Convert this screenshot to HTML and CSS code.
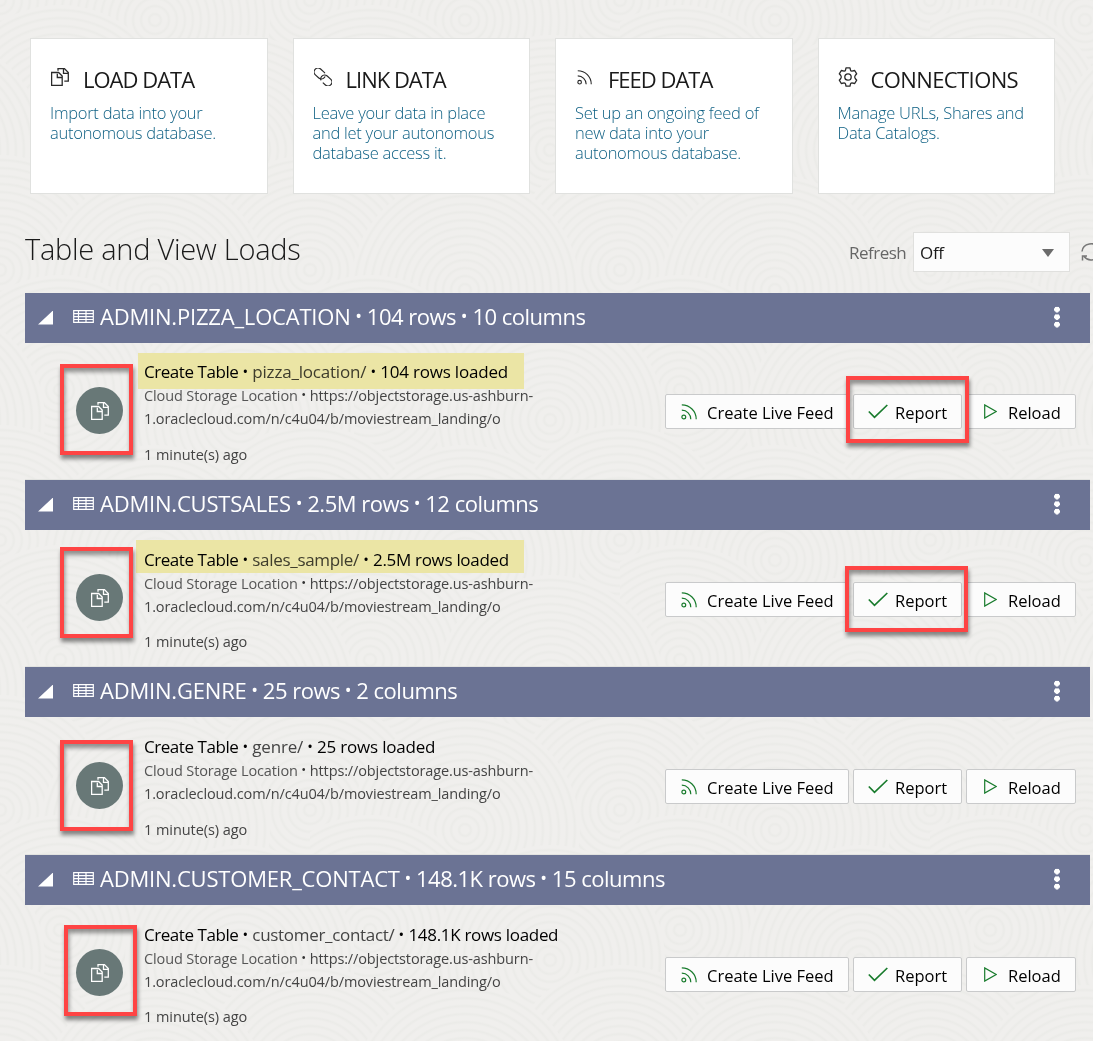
FILE: index.html
```html
<!DOCTYPE html>
<html lang="en">
<head>
<meta charset="utf-8">
<title>Data Load</title>
<link rel="stylesheet" href="styles.css">
</head>
<body>
<svg class="defs" width="0" height="0" aria-hidden="true">
  <symbol id="i-copy" viewBox="0 0 18 18"><path d="M.6 4.500h7l3.600 3.600v9.300H.6zM6.300 5.800v3.700h4.600M7 2.800V.6h6.400l3.900 3.900v8.700h-4M12.500 1.200v4.200h4.300" fill="none" stroke="currentColor" stroke-width="1.300"/></symbol>
  <symbol id="i-link" viewBox="0 0 18 18"><g fill="none" stroke="currentColor" stroke-width="1.200"><rect x="-6.200" y="-3.900" width="12.400" height="7.800" rx="3.900" transform="translate(5.700 5.500) rotate(42)" stroke-dasharray="29 3" stroke-dashoffset="-9"/><rect x="-6.200" y="-3.900" width="12.400" height="7.800" rx="3.900" transform="translate(12.300 12.500) rotate(42)" stroke-dasharray="29 3" stroke-dashoffset="9"/></g></symbol>
  <symbol id="i-feed" viewBox="0 0 16 16"><g fill="none" stroke="currentColor" stroke-width="1.200"><circle cx="2.800" cy="13" r="1.900"/><path d="M.8 6.200c5 0 9 4 9 9M.8 .8c8 0 14.400 6.400 14.400 14.400"/></g></symbol>
  <symbol id="i-gear" viewBox="0 0 20 20"><g fill="none" stroke="currentColor" stroke-width="1.300" stroke-linejoin="round"><circle cx="10" cy="10" r="3.200"/><path d="M8 .8h4l.5 2.300q.2 1 1.300 1l2.900-.6 2 3.300-1.500 1.700q-1 1.500 0 3l1.500 1.700-2 3.300-2.900-.6q-1.100 0-1.300 1L12 19.200H8l-.5-2.300q-.2-1-1.300-1l-2.900.6-2-3.300 1.500-1.700q1-1.500 0-3L1.300 6.800l2-3.300 2.900.6q1.100 0 1.300-1z"/></g></symbol>
  <symbol id="i-table" viewBox="0 0 21 13"><path d="M.7.7h19.600v11.600H.7zM.7 3.700h19.600M.7 6.600h19.600M.7 9.500h19.600M5.500 .7v11.600M13 .7v11.600" fill="none" stroke="currentColor" stroke-width="1.200"/></symbol>
  <symbol id="i-check" viewBox="0 0 20 15"><path d="m.8 7.500 5.700 5.800L19.300 1" fill="none" stroke="currentColor" stroke-width="1.700"/></symbol>
  <symbol id="i-play" viewBox="0 0 13 15"><path d="M.7 .9v13.200l11.500-6.600z" fill="none" stroke="currentColor" stroke-width="1.200"/></symbol>
</svg>
<svg class="backdrop" width="1093" height="1041" aria-hidden="true">
  <defs>
    <radialGradient id="rings" gradientUnits="userSpaceOnUse" cx="0" cy="0" r="8" spreadMethod="repeat">
      <stop offset="0" stop-color="#f0efed"/><stop offset=".45" stop-color="#f0efed"/><stop offset=".75" stop-color="#ebebe8"/><stop offset="1" stop-color="#f0efed"/>
    </radialGradient>
    <circle id="knot" r="115" fill="url(#rings)"/>
    <pattern id="tile" width="310" height="270" patternUnits="userSpaceOnUse">
      <rect width="310" height="270" fill="#f0efed"/>
      <use href="#knot" x="0" y="0"/><use href="#knot" x="310" y="0"/><use href="#knot" x="155" y="20"/>
      <use href="#knot" x="60" y="120"/><use href="#knot" x="240" y="150"/><use href="#knot" x="-70" y="150"/>
      <use href="#knot" x="0" y="270"/><use href="#knot" x="310" y="270"/><use href="#knot" x="155" y="290"/>
    </pattern>
  </defs>
  <rect width="1093" height="1041" fill="url(#tile)"/>
</svg>
<main class="page">
  <nav class="cards">
    <a class="card"><h2><svg class="ic"><use href="#i-copy"/></svg><span>LOAD DATA</span></h2><p>Import data into your<br>autonomous database.</p></a>
    <a class="card"><h2><svg class="ic"><use href="#i-link"/></svg><span>LINK DATA</span></h2><p>Leave your data in place<br>and let your autonomous<br>database access it.</p></a>
    <a class="card"><h2><svg class="ic feed"><use href="#i-feed"/></svg><span>FEED DATA</span></h2><p>Set up an ongoing feed of<br>new data into your<br>autonomous database.</p></a>
    <a class="card"><h2 class="wide"><svg class="ic gear"><use href="#i-gear"/></svg><span>CONNECTIONS</span></h2><p>Manage URLs, Shares and<br>Data Catalogs.</p></a>
  </nav>
  <header class="toolbar">
    <h1>Table and View Loads</h1>
    <div class="refresh"><span class="label">Refresh</span><div class="select"><span>Off</span><i class="caret"></i></div>
      <svg class="reload" viewBox="0 0 20 20"><path d="M1 9.500a9 8.500 0 0 1 17-3M19 11A9 8.500 0 0 1 3 14.500M1.500 18.500V14h4.500" fill="none" stroke="currentColor" stroke-width="1.500"/></svg></div>
  </header>

  <section class="load">
    <div class="bar"><i class="tri"></i><svg class="tbl"><use href="#i-table"/></svg><span class="name">ADMIN.PIZZA_LOCATION</span><b>•</b><span>104 rows</span><b>•</b><span>10 columns</span><i class="dots"></i></div>
    <div class="body">
      <div class="disc"><svg><use href="#i-copy"/></svg></div>
      <div class="info">
        <div class="line1"><span class="op">Create Table</span><b>•</b><span class="soft">pizza_location/</span><b>•</b><span>104 rows loaded</span></div>
        <div class="line2"><span class="src">Cloud Storage Location</span><b>•</b><span>https://objectstorage.us-ashburn-</span></div>
        <div class="line3">1.oraclecloud.com/n/c4u04/b/moviestream_landing/o</div>
        <div class="ago">1 minute(s) ago</div>
      </div>
      <div class="actions"><button class="w1"><svg class="bf"><use href="#i-feed"/></svg>Create Live Feed</button><button class="w2"><svg class="bc"><use href="#i-check"/></svg>Report</button><button class="w3"><svg class="bp"><use href="#i-play"/></svg>Reload</button></div>
    </div>
    <div class="mark m1"></div><div class="frame f1"></div><div class="frame r1"></div>
  </section>

  <section class="load low">
    <div class="bar"><i class="tri"></i><svg class="tbl"><use href="#i-table"/></svg><span class="name">ADMIN.CUSTSALES</span><b>•</b><span>2.5M rows</span><b>•</b><span>12 columns</span><i class="dots"></i></div>
    <div class="body">
      <div class="disc"><svg><use href="#i-copy"/></svg></div>
      <div class="info">
        <div class="line1 snug"><span class="op">Create Table</span><b>•</b><span class="soft">sales_sample/</span><b>•</b><span>2.5M rows loaded</span></div>
        <div class="line2"><span class="src">Cloud Storage Location</span><b>•</b><span>https://objectstorage.us-ashburn-</span></div>
        <div class="line3">1.oraclecloud.com/n/c4u04/b/moviestream_landing/o</div>
        <div class="ago">1 minute(s) ago</div>
      </div>
      <div class="actions"><button class="w1"><svg class="bf"><use href="#i-feed"/></svg>Create Live Feed</button><button class="w2"><svg class="bc"><use href="#i-check"/></svg>Report</button><button class="w3"><svg class="bp"><use href="#i-play"/></svg>Reload</button></div>
    </div>
    <div class="mark m2"></div><div class="frame f2"></div><div class="frame r2"></div>
  </section>

  <section class="load low tall">
    <div class="bar"><i class="tri"></i><svg class="tbl"><use href="#i-table"/></svg><span class="name">ADMIN.GENRE</span><b>•</b><span>25 rows</span><b>•</b><span>2 columns</span><i class="dots"></i></div>
    <div class="body">
      <div class="disc"><svg><use href="#i-copy"/></svg></div>
      <div class="info">
        <div class="line1"><span class="op">Create Table</span><b>•</b><span class="soft">genre/</span><b>•</b><span>25 rows loaded</span></div>
        <div class="line2"><span class="src">Cloud Storage Location</span><b>•</b><span>https://objectstorage.us-ashburn-</span></div>
        <div class="line3">1.oraclecloud.com/n/c4u04/b/moviestream_landing/o</div>
        <div class="ago">1 minute(s) ago</div>
      </div>
      <div class="actions"><button class="w1"><svg class="bf"><use href="#i-feed"/></svg>Create Live Feed</button><button class="w2"><svg class="bc"><use href="#i-check"/></svg>Report</button><button class="w3"><svg class="bp"><use href="#i-play"/></svg>Reload</button></div>
    </div>
    <div class="frame f3"></div>
  </section>

  <section class="load low">
    <div class="bar"><i class="tri"></i><svg class="tbl"><use href="#i-table"/></svg><span class="name">ADMIN.CUSTOMER_CONTACT</span><b>•</b><span>148.1K rows</span><b>•</b><span>15 columns</span><i class="dots"></i></div>
    <div class="body">
      <div class="disc"><svg><use href="#i-copy"/></svg></div>
      <div class="info">
        <div class="line1 snug"><span class="op">Create Table</span><b>•</b><span class="soft">customer_contact/</span><b>•</b><span>148.1K rows loaded</span></div>
        <div class="line2"><span class="src">Cloud Storage Location</span><b>•</b><span>https://objectstorage.us-ashburn-</span></div>
        <div class="line3">1.oraclecloud.com/n/c4u04/b/moviestream_landing/o</div>
        <div class="ago">1 minute(s) ago</div>
      </div>
      <div class="actions"><button class="w1"><svg class="bf"><use href="#i-feed"/></svg>Create Live Feed</button><button class="w2"><svg class="bc"><use href="#i-check"/></svg>Report</button><button class="w3"><svg class="bp"><use href="#i-play"/></svg>Reload</button></div>
    </div>
    <div class="frame f4"></div>
  </section>
</main>
</body>
</html>
```
FILE: styles.css
```css
* { box-sizing: border-box; }
html, body { margin: 0; height: 1041px; overflow: hidden; }
body { background: #f0efed; font-family: "Open Sans", "Noto Sans", sans-serif; color: #1a1a1a; position: relative; }
.defs { position: absolute; }
.backdrop { position: absolute; left: 0; top: 0; z-index: 0; }
.page { position: relative; z-index: 1; width: 1093px; height: 1041px; overflow: hidden; padding-top: 38px; }
h1, h2, p { margin: 0; font-weight: 400; }
b { font-weight: 400; }

.cards { display: grid; grid-template-columns: repeat(4, 237.500px); gap: 25px; padding-left: 30px; }
.card { height: 156px; background: #fff; border: 1px solid #e0e1df; padding: 25px 0 0 19px; white-space: nowrap; }
.card h2 { display: flex; font-size: 22px; line-height: 30px; letter-spacing: -1px; padding-left: 1px; }
.card h2.wide { letter-spacing: -.6px; }
.card h2 span { margin-left: 14px; }
.ic { width: 18px; height: 18px; margin-top: 4px; color: #2a2a2a; flex: none; }
.ic.feed { width: 15px; height: 15px; margin: 6px 2px 0 1px; }
.ic.gear { width: 20px; height: 20px; margin: 3px -1px 0 -1px; }
.card p { font-size: 16.500px; line-height: 20px; margin-top: 9px; color: #0d5f83; font-weight: 350; letter-spacing: -.26px; }

.toolbar { display: flex; justify-content: space-between; height: 99px; padding: 38px 0 0 25px; }
h1 { font-size: 29px; line-height: 36px; margin-top: -1px; font-weight: 300; letter-spacing: -.27px; }
.refresh { display: flex; width: 244px; height: 40px; flex: none; align-items: center; font-size: 17px; white-space: nowrap; }
.refresh .label { width: 64px; flex: none; color: #666; letter-spacing: -.5px; }
.select { width: 157px; height: 40px; flex: none; background: #fcfcfc; border: 1px solid #e0e0de; display: flex; align-items: center; justify-content: space-between; padding: 1px 15px 0 6px; letter-spacing: -.3px; }
.caret { border: 6px solid transparent; border-top: 8px solid #6b6b6b; border-bottom: 0; }
.reload { width: 20px; height: 20px; margin-left: 11px; color: #777; flex: none; }

.load { position: relative; height: 187px; margin-left: 25px; width: 1065px; border-bottom: 1px solid #e2e3e0; }
.load.tall { height: 188px; }
.bar { height: 50px; background: #6b7394; color: #fff; display: flex; align-items: center; font-size: 22px; letter-spacing: -.5px; padding: 0 30px 4px 14px; white-space: nowrap; }
.bar .name { letter-spacing: -.2px; }
.bar b { width: 16.300px; text-align: center; font-size: 18px; letter-spacing: 0; }
.tri { width: 15px; height: 14px; margin: 3px 0 0 -1px; background: #fff; clip-path: polygon(100% 0, 100% 100%, 0 100%); }
.tbl { width: 21px; height: 13px; margin: 1px 6px 0 20px; }
.dots { width: 6px; height: 22px; margin-left: auto; background: radial-gradient(circle at 3px 3.500px, #fff 2.600px, transparent 3.100px) 0 0 / 6px 7.500px; margin-right: .5px; margin-top: 1px; }
.body { display: flex; height: 136px; }
.disc { width: 47px; height: 47px; margin: 44px 0 0 51px; border-radius: 50%; background: #687877; color: #fff; display: flex; align-items: center; justify-content: center; flex: none; }
.tall .disc { margin-top: 45px; }
.disc svg { width: 18px; height: 18px; }
.info { width: 521px; margin-left: 21px; padding-top: 17px; white-space: nowrap; color: #444; font-size: 14.500px; }
.low .info { padding-top: 18px; }
.info div { line-height: 23px; display: flex; letter-spacing: -.12px; }
.info .line1 { color: #000; font-size: 17px; line-height: 24px; letter-spacing: -.2px; }
.info .line1.snug { letter-spacing: -.31px; }
.line1 .op { letter-spacing: -.45px; }
.info b { width: 14px; text-align: center; font-size: 15px; color: #000; letter-spacing: 0; position: relative; top: -1px; }
.info .line2 b { width: 12px; font-size: 13px; color: #333; }
.soft { color: #444; }
.info .src { color: #555; }
.info .ago { margin-top: 13px; letter-spacing: -.06px; }
.low .info .ago { margin-top: 12px; }
.tall.low .info .ago { margin-top: 13px; }
.actions { display: flex; gap: 4px; margin-top: 51px; height: 35px; }
.low .actions { margin-top: 52px; }
button { height: 35px; background: #fcfcfc; border: 1px solid #c9cacb; border-radius: 2px; font: 400 16.500px "Open Sans", sans-serif; letter-spacing: 0; color: #000; display: flex; align-items: center; padding: 1px 0 0 15px; white-space: nowrap; }
button svg { color: #187b2c; flex: none; }
.w1 { width: 184px; } .w2 { width: 109px; padding-left: 14px; } .w3 { width: 110px; }
.bf { width: 16px; height: 16px; margin: -1px 10px 0 0; }
.bc { width: 20px; height: 15px; margin: -1px 7px 0 0; }
.bp { width: 13px; height: 15px; margin: -1px 11px 0 2px; }

.mark { position: absolute; background: #ebe5a5; mix-blend-mode: multiply; }
.m1 { left: 113px; top: 60px; width: 386px; height: 36px; }
.m2 { left: 111px; top: 60px; width: 388px; height: 33px; }
.frame { position: absolute; width: 73px; height: 91px; border: 4px solid #fe4444; box-shadow: 1px 4px 4px rgba(0,0,0,.45), inset 1px 4px 4px rgba(0,0,0,.4); }
.f1 { left: 35px; top: 71px; } .f2 { left: 35px; top: 67px; }
.f3 { left: 35px; top: 73px; } .f4 { left: 39px; top: 70px; }
.r1 { left: 821px; top: 83px; width: 123px; height: 67px; }
.r2 { left: 820px; top: 86px; width: 123px; height: 66px; }
```
